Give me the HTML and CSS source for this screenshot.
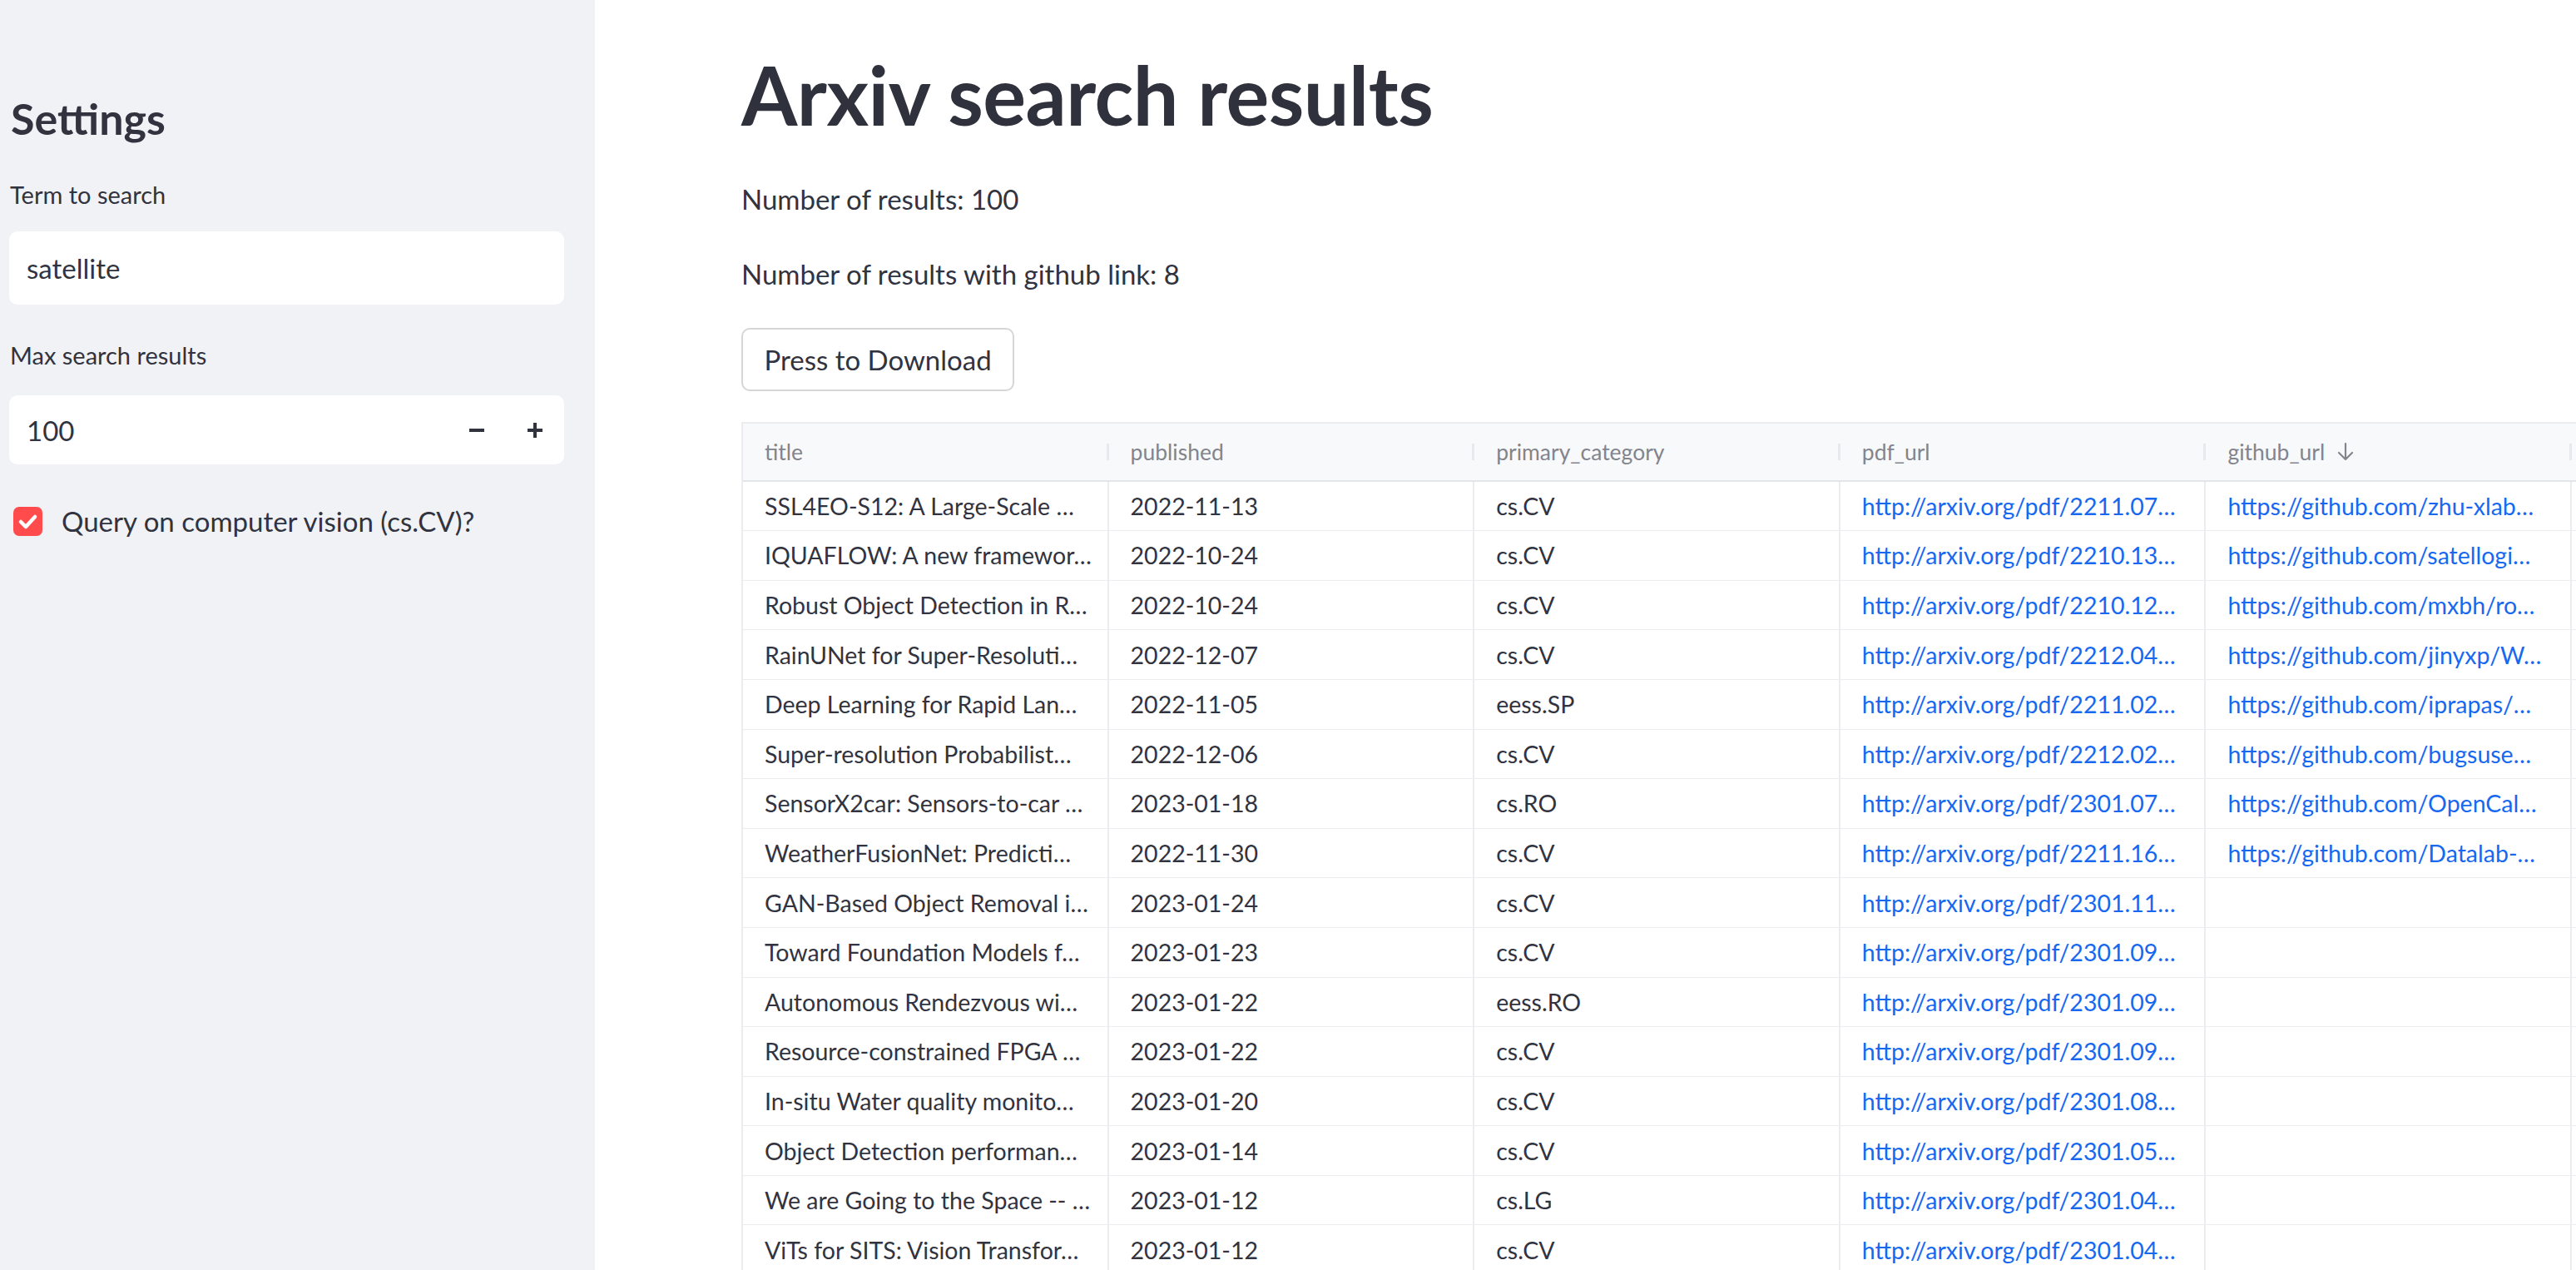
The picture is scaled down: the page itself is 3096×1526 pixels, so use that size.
FILE: index.html
```
<!DOCTYPE html>
<html lang="en">
<head>
<meta charset="utf-8">
<title>Arxiv search results</title>
<link rel="stylesheet" href="styles.css">
</head>
<body>
<div class="app">
  <aside class="sidebar">
    <h2 class="side-title">Settings</h2>
    <label class="field-label label-term">Term to search</label>
    <div class="text-input">satellite</div>
    <label class="field-label label-max">Max search results</label>
    <div class="number-input">
      <span class="number-value">100</span>
      <span class="step-btn"><svg width="18" height="18" viewBox="0 0 18 18"><rect x="0" y="7" width="18" height="4" fill="#31333f"/></svg></span>
      <span class="step-btn"><svg width="18" height="18" viewBox="0 0 18 18"><rect x="0" y="7" width="18" height="4" fill="#31333f"/><rect x="7" y="0" width="4" height="18" fill="#31333f"/></svg></span>
    </div>
    <div class="checkbox-row">
      <span class="checkbox"><svg width="35" height="35" viewBox="0 0 35 35"><polyline points="9,18 15,24 26,12" fill="none" stroke="#fff" stroke-width="4.5" stroke-linecap="round" stroke-linejoin="round"/></svg></span>
      <span class="checkbox-label">Query on computer vision (cs.CV)?</span>
    </div>
  </aside>
  <main class="main">
    <h1 class="page-title">Arxiv search results</h1>
    <p class="stat stat-1">Number of results: 100</p>
    <p class="stat stat-2">Number of results with github link: 8</p>
    <button class="download-btn">Press to Download</button>
    <div class="grid-wrap">
      <div class="grid">
        <div class="hcell"><span class="hlabel">title</span><span class="hsep"></span></div>
        <div class="hcell"><span class="hlabel">published</span><span class="hsep"></span></div>
        <div class="hcell"><span class="hlabel">primary_category</span><span class="hsep"></span></div>
        <div class="hcell"><span class="hlabel">pdf_url</span><span class="hsep"></span></div>
        <div class="hcell"><span class="hlabel">github_url <svg class="sort-icon" width="26" height="24" viewBox="0 0 26 24"><path d="M13 2 V21 M5 13 L13 21 L21 13" fill="none" stroke="#83848c" stroke-width="2.2" stroke-linecap="round" stroke-linejoin="round"/></svg></span><span class="hsep"></span></div>
        <div class="hcell"><span class="hlabel"></span><span class="hsep"></span></div>

        <div class="cell">SSL4EO-S12: A Large-Scale …</div><div class="cell">2022-11-13</div><div class="cell">cs.CV</div><div class="cell link">http://arxiv.org/pdf/2211.07…</div><div class="cell link">https://github.com/zhu-xlab…</div><div class="cell"></div>
        <div class="cell">IQUAFLOW: A new framewor…</div><div class="cell">2022-10-24</div><div class="cell">cs.CV</div><div class="cell link">http://arxiv.org/pdf/2210.13…</div><div class="cell link">https://github.com/satellogi…</div><div class="cell"></div>
        <div class="cell">Robust Object Detection in R…</div><div class="cell">2022-10-24</div><div class="cell">cs.CV</div><div class="cell link">http://arxiv.org/pdf/2210.12…</div><div class="cell link">https://github.com/mxbh/ro…</div><div class="cell"></div>
        <div class="cell">RainUNet for Super-Resoluti…</div><div class="cell">2022-12-07</div><div class="cell">cs.CV</div><div class="cell link">http://arxiv.org/pdf/2212.04…</div><div class="cell link">https://github.com/jinyxp/W…</div><div class="cell"></div>
        <div class="cell">Deep Learning for Rapid Lan…</div><div class="cell">2022-11-05</div><div class="cell">eess.SP</div><div class="cell link">http://arxiv.org/pdf/2211.02…</div><div class="cell link">https://github.com/iprapas/…</div><div class="cell"></div>
        <div class="cell">Super-resolution Probabilist…</div><div class="cell">2022-12-06</div><div class="cell">cs.CV</div><div class="cell link">http://arxiv.org/pdf/2212.02…</div><div class="cell link">https://github.com/bugsuse…</div><div class="cell"></div>
        <div class="cell">SensorX2car: Sensors-to-car …</div><div class="cell">2023-01-18</div><div class="cell">cs.RO</div><div class="cell link">http://arxiv.org/pdf/2301.07…</div><div class="cell link">https://github.com/OpenCal…</div><div class="cell"></div>
        <div class="cell">WeatherFusionNet: Predicti…</div><div class="cell">2022-11-30</div><div class="cell">cs.CV</div><div class="cell link">http://arxiv.org/pdf/2211.16…</div><div class="cell link">https://github.com/Datalab-…</div><div class="cell"></div>
        <div class="cell">GAN-Based Object Removal i…</div><div class="cell">2023-01-24</div><div class="cell">cs.CV</div><div class="cell link">http://arxiv.org/pdf/2301.11…</div><div class="cell"></div><div class="cell"></div>
        <div class="cell">Toward Foundation Models f…</div><div class="cell">2023-01-23</div><div class="cell">cs.CV</div><div class="cell link">http://arxiv.org/pdf/2301.09…</div><div class="cell"></div><div class="cell"></div>
        <div class="cell">Autonomous Rendezvous wi…</div><div class="cell">2023-01-22</div><div class="cell">eess.RO</div><div class="cell link">http://arxiv.org/pdf/2301.09…</div><div class="cell"></div><div class="cell"></div>
        <div class="cell">Resource-constrained FPGA …</div><div class="cell">2023-01-22</div><div class="cell">cs.CV</div><div class="cell link">http://arxiv.org/pdf/2301.09…</div><div class="cell"></div><div class="cell"></div>
        <div class="cell">In-situ Water quality monito…</div><div class="cell">2023-01-20</div><div class="cell">cs.CV</div><div class="cell link">http://arxiv.org/pdf/2301.08…</div><div class="cell"></div><div class="cell"></div>
        <div class="cell">Object Detection performan…</div><div class="cell">2023-01-14</div><div class="cell">cs.CV</div><div class="cell link">http://arxiv.org/pdf/2301.05…</div><div class="cell"></div><div class="cell"></div>
        <div class="cell">We are Going to the Space -- …</div><div class="cell">2023-01-12</div><div class="cell">cs.LG</div><div class="cell link">http://arxiv.org/pdf/2301.04…</div><div class="cell"></div><div class="cell"></div>
        <div class="cell">ViTs for SITS: Vision Transfor…</div><div class="cell">2023-01-12</div><div class="cell">cs.CV</div><div class="cell link">http://arxiv.org/pdf/2301.04…</div><div class="cell"></div><div class="cell"></div>
      </div>
    </div>
  </main>
</div>
</body>
</html>
```
FILE: styles.css
```
html, body {
  margin: 0;
  padding: 0;
  height: 100%;
  overflow: hidden;
}

body {
  font-family: Lato, "Liberation Sans", sans-serif;
  color: #31333f;
  background: #ffffff;
}

.app {
  display: flex;
  height: 1526px;
  width: 3096px;
}

/* ---------- Sidebar ---------- */
.sidebar {
  flex: 0 0 715px;
  box-sizing: border-box;
  background: #f0f2f6;
  padding: 112px 37px 0 11px;
  display: flex;
  flex-direction: column;
}

.side-title {
  margin: 0 0 0 2px;
  font-size: 52px;
  line-height: 60px;
  font-weight: 700;
  color: #31333f;
}

.field-label {
  display: block;
  font-size: 29px;
  line-height: 40px;
  margin-left: 1px;
}

.label-term { margin-top: 42px; }
.label-max { margin-top: 41px; }

.text-input {
  margin-top: 24px;
  height: 88px;
  box-sizing: border-box;
  background: #ffffff;
  border-radius: 10px;
  padding: 0 21px;
  display: flex;
  align-items: center;
  font-size: 33px;
}

.number-input {
  margin-top: 28px;
  height: 83px;
  box-sizing: border-box;
  background: #ffffff;
  border-radius: 10px;
  padding-left: 21px;
  display: flex;
  align-items: center;
  font-size: 33px;
}

.number-value {
  flex: 1;
}

.step-btn {
  width: 70px;
  height: 100%;
  display: flex;
  align-items: center;
  justify-content: center;
}

.checkbox-row {
  margin-top: 48px;
  display: flex;
  align-items: center;
  gap: 23px;
  padding-left: 5px;
}

.checkbox {
  width: 35px;
  height: 35px;
  border-radius: 7px;
  background: #ff4b4b;
  display: flex;
}

.checkbox-label {
  font-size: 33px;
  line-height: 40px;
}

/* ---------- Main ---------- */
.main {
  flex: 1;
  min-width: 0;
  overflow: hidden;
  padding: 56px 0 0 176px;
  display: flex;
  flex-direction: column;
  align-items: flex-start;
}

.page-title {
  margin: 0;
  font-size: 97px;
  line-height: 115px;
  font-weight: 700;
  color: #2f313c;
  letter-spacing: -0.5px;
}

.stat {
  margin: 0;
  font-size: 33px;
  line-height: 50px;
}

.stat-1 { margin-top: 43px; }
.stat-2 { margin-top: 40px; }

.download-btn {
  margin-top: 40px;
  width: 328px;
  height: 76px;
  box-sizing: border-box;
  background: #ffffff;
  border: 2px solid #d6d6d9;
  border-radius: 10px;
  font-family: Lato, "Liberation Sans", sans-serif;
  font-size: 33px;
  color: #31333f;
  padding: 0;
}

.grid-wrap {
  margin-top: 37px;
  width: 100%;
  overflow: hidden;
}

.grid {
  display: grid;
  grid-template-columns: repeat(6, 439.6px);
  grid-template-rows: 70px;
  grid-auto-rows: 59.6px;
  border-top: 2px solid #ebecef;
  border-left: 2px solid #ebecef;
  width: max-content;
}

.hcell {
  background: #f8f9fb;
  border-bottom: 2px solid #e4e5e9;
  display: flex;
  align-items: center;
  justify-content: space-between;
  padding-left: 26px;
  box-sizing: border-box;
  font-size: 26.5px;
  color: #83848c;
}

.hlabel {
  display: flex;
  align-items: center;
  gap: 12px;
  white-space: nowrap;
}

.sort-icon {
  display: block;
}

.hsep {
  width: 3px;
  height: 20px;
  background: #e8e9ed;
}

.cell {
  box-sizing: border-box;
  border-right: 2px solid #ebecef;
  border-bottom: 1.5px solid #ebecef;
  padding: 0 8px 0 26px;
  display: flex;
  align-items: center;
  font-size: 28.5px;
  white-space: nowrap;
  overflow: hidden;
  color: #31333f;
}

.link {
  color: #1668f0;
}
```
